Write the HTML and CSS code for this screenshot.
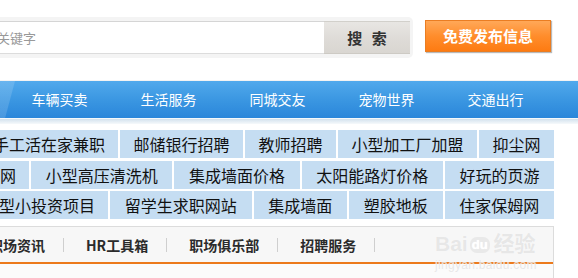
FILE: index.html
```html
<!DOCTYPE html>
<html lang="zh-CN">
<head>
<meta charset="utf-8">
<title>分类信息</title>
<link rel="stylesheet" href="styles.css">
</head>
<body>
<header class="top">
  <div class="search">
    <div class="kw">关键字</div>
    <div class="sbtn">搜 索</div>
  </div>
  <div class="publish">免费发布信息</div>
</header>
<nav class="nav">
  <a>车辆买卖</a>
  <a>生活服务</a>
  <a>同城交友</a>
  <a>宠物世界</a>
  <a>交通出行</a>
</nav>
<div class="navshade"></div>
<div class="tags">
  <div class="row r1">
    <span class="tag first">手工活在家兼职</span>
    <span class="tag">邮储银行招聘</span>
    <span class="tag">教师招聘</span>
    <span class="tag">小型加工厂加盟</span>
    <span class="tag">抑尘网</span>
  </div>
  <div class="row r2">
    <span class="tag first">网</span>
    <span class="tag">小型高压清洗机</span>
    <span class="tag">集成墙面价格</span>
    <span class="tag">太阳能路灯价格</span>
    <span class="tag">好玩的页游</span>
  </div>
  <div class="row r3">
    <span class="tag first">型小投资项目</span>
    <span class="tag">留学生求职网站</span>
    <span class="tag">集成墙面</span>
    <span class="tag">塑胶地板</span>
    <span class="tag">住家保姆网</span>
  </div>
</div>
<div class="box">
  <ul class="tabs">
    <li class="firsttab">职场资讯</li>
    <li>HR工具箱</li>
    <li>职场俱乐部</li>
    <li>招聘服务</li>
  </ul>
  <div class="boxbody"></div>
  <div class="wm">
    <div class="wm-top">Bai<span class="wm-du">du</span>经验</div>
    <div class="wm-url">jingyan.baidu.com</div>
  </div>
</div>
</body>
</html>
```
FILE: styles.css
```css
html, body {
  margin: 0;
  padding: 0;
  background: #fff;
}
body {
  width: 578px;
  height: 278px;
  overflow: hidden;
  font-family: "Noto Sans CJK SC", "Liberation Sans", sans-serif;
}

/* header */
.top {
  height: 80px;
  border-bottom: 1px solid #f3f3f3;
  display: flex;
  align-items: flex-start;
}
.search {
  margin-top: 17px;
  margin-left: -10px;
  width: 423px;
  height: 41px;
  box-sizing: border-box;
  padding: 4px 3px 4px 0;
  background: #f4f4f4;
  border-radius: 0 5px 5px 0;
  display: flex;
}
.kw {
  flex: 1;
  background: #fff;
  border-top: 1px solid #d5d5d5;
  border-bottom: 1px solid #dcdcdc;
  font-size: 13px;
  color: #999;
  line-height: 31px;
  padding-left: 7px;
}
.sbtn {
  width: 86px;
  background: linear-gradient(#e8e6e3, #dedbd7 55%, #d9d6d1);
  border-top: 1px solid #d2d0cb;
  border-bottom: 1px solid #cdcac4;
  text-align: center;
  font-size: 15px;
  font-weight: bold;
  color: #333;
  line-height: 31px;
  white-space: pre;
  word-spacing: 6px;
}
.publish {
  margin-top: 20px;
  margin-left: 12px;
  width: 126px;
  height: 32px;
  box-sizing: border-box;
  border: 1px solid #ea7d22;
  background: linear-gradient(#ffa858, #ff8d2c 50%, #fd7b12);
  color: #fff;
  font-weight: bold;
  font-size: 15px;
  line-height: 30px;
  text-align: center;
  box-shadow: 1px 1px 1px #b9b9b9;
}

/* nav */
.nav {
  height: 37px;
  display: flex;
  padding-left: 5px;
  background:
    linear-gradient(105deg, rgba(255,255,255,0.14) 0, rgba(255,255,255,0.14) 14px, rgba(255,255,255,0) 15px),
    linear-gradient(#51a9ec, #3b97e2 50%, #2a86da);
}
.nav a {
  width: 109px;
  text-align: center;
  color: #fff;
  font-size: 14px;
  line-height: 37px;
}
.navshade {
  height: 5px;
  border-top: 1px solid #f4f8fb;
  background: linear-gradient(#d3e2ee, #f6f9fb);
}

/* tags */
.tags {
  width: 554px;
  margin-top: 6px;
}
.row {
  display: flex;
  gap: 2px;
  height: 28px;
}
.r1 { margin: 0 0 3px -7px; }
.r2 { margin: 0 0 2px 0; }
.r3 { margin: 0 0 0 -1px; }
.tag {
  flex: 1 0 auto;
  background: #c5ddf2;
  padding: 0 13px;
  font-size: 16px;
  line-height: 28px;
  text-align: center;
  white-space: nowrap;
  color: #111;
}
.tag.first {
  flex: 0 0 auto;
  padding-left: 0;
  text-align: left;
}

/* bottom box */
.box {
  position: relative;
  width: 554px;
  height: 60px;
  box-sizing: border-box;
  margin-top: 7px;
  border-top: 1px solid #dcdcdc;
  border-right: 1px solid #dcdcdc;
  background: #fbfbfb;
}
.tabs {
  list-style: none;
  margin: 0;
  padding: 0;
  display: flex;
  height: 35px;
  background: #f7f7f7;
  border-bottom: 2px solid #ec7a1c;
}
.tabs li {
  display: flex;
  align-items: center;
  padding-left: 22px;
  font-size: 14px;
  font-weight: bold;
  color: #2b2b2b;
  white-space: nowrap;
}
.tabs li::after {
  content: "";
  display: block;
  width: 1px;
  height: 14px;
  margin-left: 18px;
  background: #cfcfcf;
}
.tabs li.firsttab {
  margin-left: -33px;
}

/* watermark */
.wm {
  position: absolute;
  right: 8px;
  top: 6px;
  width: 110px;
  color: rgba(215, 215, 215, 0.6);
  text-shadow: 0 0 1px #fff;
  pointer-events: none;
}
.wm-top {
  font-family: "Liberation Sans", "Noto Sans CJK SC", sans-serif;
  font-size: 21px;
  font-weight: bold;
  line-height: 22px;
}
.wm-du {
  display: inline-block;
  margin: 0 4px 0 2px;
  padding: 0 2px;
  font-size: 13px;
  line-height: 16px;
  border-radius: 7px;
  background: rgba(220, 220, 220, 0.5);
  color: #fff;
  vertical-align: 2px;
}
.wm-url {
  font-family: "Liberation Sans", sans-serif;
  font-size: 12px;
  line-height: 14px;
  margin-top: 3px;
  letter-spacing: 0.3px;
}
```
